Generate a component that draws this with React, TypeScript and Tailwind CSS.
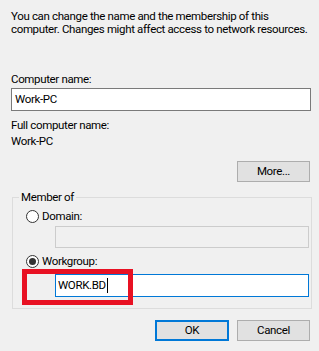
export default function App() {
  return (
    <div className="w-[319px] h-[351px] overflow-hidden bg-[#f0f0f0] pl-[11px] pr-[8px] pt-[10px] font-['Roboto','Liberation_Sans',sans-serif] text-[11.5px] leading-[13px] tracking-[-0.35px] text-black">
      <p className="whitespace-nowrap">
        You can change the name and the membership of this
        <br />
        computer. Changes might affect access to network resources.
      </p>

      <div className="mt-[37px]">Computer name:</div>
      <div className="mt-[2px] flex h-[23px] w-[300px] items-center border border-[#7a7a7a] bg-white px-[3px]">
        Work-PC
      </div>

      <div className="mt-[8px]">Full computer name:</div>
      <div className="mt-[3px]">Work-PC</div>

      <div className="mt-[13px] flex justify-end pr-[1px]">
        <button
          type="button"
          className="h-[21px] w-[73px] border border-[#adadad] bg-[#e1e1e1]"
        >
          More...
        </button>
      </div>

      <fieldset className="relative mt-[9px] ml-[1px] h-[118px] w-[300px] border border-[#dcdcdc]">
        <legend className="ml-[6px] px-[2px]">Member of</legend>

        <div className="pl-[13px]">
          <label className="mt-[6px] flex items-center gap-[3px]">
            <span className="h-[13px] w-[13px] rounded-full border border-[#333] bg-white" />
            <span>Domain:</span>
          </label>
          <div className="mt-[3px] ml-[29px] h-[22px] w-[254px] border border-[#cccccc] bg-[#f0f0f0]" />

          <label className="mt-[7px] flex items-center gap-[3px]">
            <span className="flex h-[13px] w-[13px] items-center justify-center rounded-full border border-[#333] bg-white">
              <span className="h-[7px] w-[7px] rounded-full bg-[#333]" />
            </span>
            <span>Workgroup:</span>
          </label>
          <div className="mt-[6px] ml-[29px] flex h-[23px] w-[254px] items-center border border-[#0078d7] bg-white px-[2px]">
            <span>WORK.BD</span>
            <span className="ml-[1px] h-[15px] w-[1px] bg-black" />
          </div>
        </div>

        <div className="absolute left-[9px] top-[65px] h-[36px] w-[111px] border-[5px] border-[#e81123]" />
      </fieldset>

      <div className="mt-[11px] flex justify-end gap-[8px] pr-[1px]">
        <button
          type="button"
          className="h-[21px] w-[74px] border-2 border-[#0078d7] bg-[#e1e1e1]"
        >
          OK
        </button>
        <button
          type="button"
          className="h-[21px] w-[73px] border border-[#adadad] bg-[#e1e1e1]"
        >
          Cancel
        </button>
      </div>
    </div>
  );
}
